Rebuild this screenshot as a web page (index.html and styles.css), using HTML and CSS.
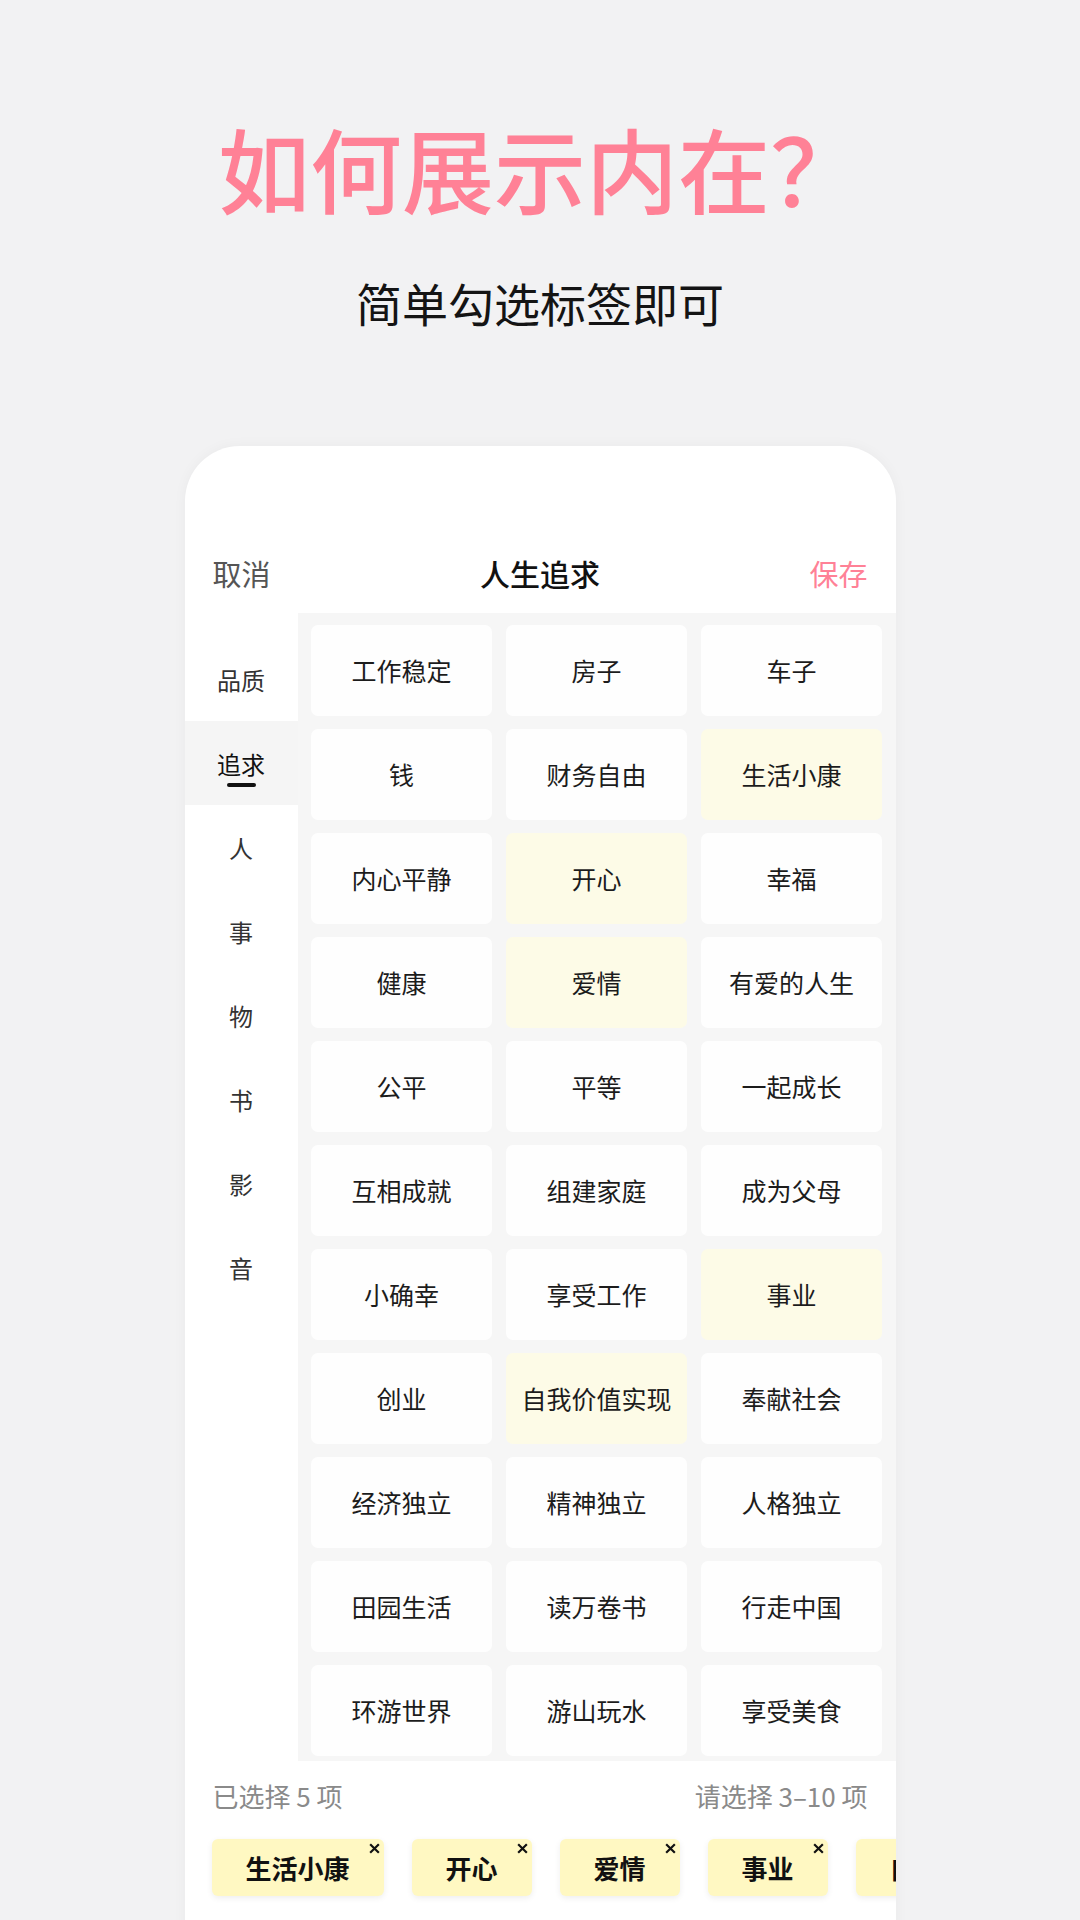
FILE: index.html
```html
<!DOCTYPE html>
<html lang="zh-CN">
<head>
<meta charset="utf-8">
<title>人生追求</title>
<link rel="stylesheet" href="styles.css">
</head>
<body>
<div class="page">
  <h1 class="title">如何展示内在？</h1>
  <p class="subtitle">简单勾选标签即可</p>

  <div class="card">
    <div class="header">
      <span class="cancel">取消</span>
      <span class="head-title">人生追求</span>
      <span class="save">保存</span>
    </div>

    <div class="content">
      <ul class="sidebar">
        <li class="side-item">品质</li>
        <li class="side-item active">追求</li>
        <li class="side-item">人</li>
        <li class="side-item">事</li>
        <li class="side-item">物</li>
        <li class="side-item">书</li>
        <li class="side-item">影</li>
        <li class="side-item">音</li>
      </ul>

      <div class="grid-wrap">
        <div class="grid">
          <div class="tile">工作稳定</div>
          <div class="tile">房子</div>
          <div class="tile">车子</div>
          <div class="tile">钱</div>
          <div class="tile">财务自由</div>
          <div class="tile selected">生活小康</div>
          <div class="tile">内心平静</div>
          <div class="tile selected">开心</div>
          <div class="tile">幸福</div>
          <div class="tile">健康</div>
          <div class="tile selected">爱情</div>
          <div class="tile">有爱的人生</div>
          <div class="tile">公平</div>
          <div class="tile">平等</div>
          <div class="tile">一起成长</div>
          <div class="tile">互相成就</div>
          <div class="tile">组建家庭</div>
          <div class="tile">成为父母</div>
          <div class="tile">小确幸</div>
          <div class="tile">享受工作</div>
          <div class="tile selected">事业</div>
          <div class="tile">创业</div>
          <div class="tile selected">自我价值实现</div>
          <div class="tile">奉献社会</div>
          <div class="tile">经济独立</div>
          <div class="tile">精神独立</div>
          <div class="tile">人格独立</div>
          <div class="tile">田园生活</div>
          <div class="tile">读万卷书</div>
          <div class="tile">行走中国</div>
          <div class="tile">环游世界</div>
          <div class="tile">游山玩水</div>
          <div class="tile">享受美食</div>
        </div>
      </div>
    </div>

    <div class="summary">
      <span>已选择 5 项</span>
      <span>请选择 3–10 项</span>
    </div>

    <div class="chips">
      <div class="chip">生活小康<svg class="close" viewBox="0 0 12 12"><path d="M2 2 L10 10 M10 2 L2 10"/></svg></div>
      <div class="chip">开心<svg class="close" viewBox="0 0 12 12"><path d="M2 2 L10 10 M10 2 L2 10"/></svg></div>
      <div class="chip">爱情<svg class="close" viewBox="0 0 12 12"><path d="M2 2 L10 10 M10 2 L2 10"/></svg></div>
      <div class="chip">事业<svg class="close" viewBox="0 0 12 12"><path d="M2 2 L10 10 M10 2 L2 10"/></svg></div>
      <div class="chip">自我价值实现<svg class="close" viewBox="0 0 12 12"><path d="M2 2 L10 10 M10 2 L2 10"/></svg></div>
    </div>
  </div>
</div>
</body>
</html>
```

FILE: styles.css
```css
* {
  box-sizing: border-box;
}

html, body {
  margin: 0;
  padding: 0;
}

body {
  width: 1080px;
  height: 1920px;
  overflow: hidden;
  background: #f2f2f3;
  font-family: "Noto Sans CJK SC", "Noto Sans", sans-serif;
  color: #111;
}

.page {
  display: flex;
  flex-direction: column;
  align-items: center;
  padding-top: 112px;
}

.title {
  margin: 0;
  font-size: 92px;
  line-height: 110px;
  font-weight: 500;
  color: #ff8196;
  letter-spacing: 0;
}

.subtitle {
  margin: 52px 0 0;
  font-size: 46px;
  line-height: 56px;
  font-weight: 400;
  color: #141414;
}

.card {
  margin-top: 116px;
  width: 711px;
  height: 1500px;
  background: #fff;
  border-radius: 55px 55px 0 0;
  box-shadow: 0 0 14px rgba(0, 0, 0, 0.04);
  overflow: hidden;
  padding-top: 87px;
}

.header {
  height: 80px;
  display: flex;
  align-items: center;
  justify-content: space-between;
  padding: 0 28px;
  font-size: 29px;
}

.cancel {
  color: #555;
  width: 90px;
}

.head-title {
  font-size: 30px;
  font-weight: 500;
  color: #111;
}

.save {
  color: #ff8196;
  width: 90px;
  text-align: right;
}

.content {
  display: flex;
  height: 1148px;
}

.sidebar {
  list-style: none;
  margin: 0;
  padding: 24px 0 0;
  width: 113px;
  flex-shrink: 0;
  background: #fff;
}

.side-item {
  position: relative;
  height: 84px;
  display: flex;
  align-items: center;
  justify-content: center;
  font-size: 24px;
  color: #333;
}

.side-item.active {
  background: #f5f5f5;
  color: #111;
}

.side-item.active::after {
  content: "";
  position: absolute;
  left: 42px;
  top: 62px;
  width: 29px;
  height: 4px;
  border-radius: 2px;
  background: #111;
}

.grid-wrap {
  flex: 1;
  background: #f6f6f6;
  padding: 12px 13.5px 0;
  overflow: hidden;
}

.grid {
  display: grid;
  grid-template-columns: repeat(3, 1fr);
  grid-auto-rows: 90.5px;
  gap: 13.5px 14px;
}

.tile {
  background: #fefefe;
  border-radius: 7px;
  display: flex;
  align-items: center;
  justify-content: center;
  font-size: 25px;
  color: #1c1c1c;
}

.tile.selected {
  background: #fdfbe7;
}

.summary {
  display: flex;
  justify-content: space-between;
  padding: 0 28px;
  margin-top: 17px;
  font-size: 26px;
  line-height: 36px;
  color: #8a8a8a;
}

.chips {
  display: flex;
  gap: 28px;
  margin-top: 25px;
  padding-left: 27px;
  flex-wrap: nowrap;
}

.chip {
  position: relative;
  flex-shrink: 0;
  height: 57px;
  padding: 0 34px;
  display: flex;
  align-items: center;
  background: #fff8c2;
  border-radius: 6px;
  box-shadow: 0 2px 6px rgba(0, 0, 0, 0.07);
  font-size: 26px;
  font-weight: 700;
  color: #111;
  white-space: nowrap;
}

.close {
  position: absolute;
  top: 3px;
  right: 3px;
  width: 13px;
  height: 13px;
  fill: none;
  stroke: #111;
  stroke-width: 2;
}
```
